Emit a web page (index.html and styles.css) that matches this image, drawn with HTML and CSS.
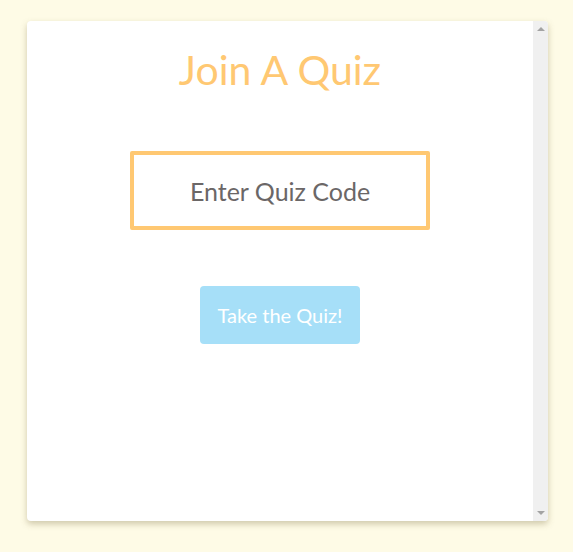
FILE: index.html
```html
<!DOCTYPE html>
<html>
<head>
<meta charset="utf-8">
<link rel="stylesheet" href="styles.css">
</head>
<body>
<div class="card">
  <div class="content">
    <h1 class="title">Join A Quiz</h1>
    <input class="code" type="text" placeholder="Enter Quiz Code">
    <button class="go">Take the Quiz!</button>
  </div>
  <div class="scrollbar">
    <span class="arrow up"></span>
    <span class="arrow down"></span>
  </div>
</div>
</body>
</html>
```
FILE: styles.css
```css
html, body {
  margin: 0;
  padding: 0;
  background: #fefbe6;
  font-family: "Lato", "Open Sans", sans-serif;
}
body {
  padding: 21px 25px 31px 27px;
}
.card {
  width: 521px;
  height: 500px;
  box-sizing: border-box;
  background: #fff;
  border-radius: 4px;
  box-shadow: 0 3px 6px rgba(120, 110, 60, 0.35);
  overflow: hidden;
  display: flex;
}
.content {
  flex: 1;
  display: flex;
  flex-direction: column;
  align-items: center;
}
.scrollbar {
  width: 15px;
  background: #f0f0f0;
  display: flex;
  flex-direction: column;
  justify-content: space-between;
  align-items: center;
  padding: 6px 0 6px;
}
.arrow {
  width: 0;
  height: 0;
  border-left: 4px solid transparent;
  border-right: 4px solid transparent;
}
.arrow.up {
  border-bottom: 4px solid #a3a3a3;
}
.arrow.down {
  border-top: 4px solid #a3a3a3;
}
.title {
  margin: 24px 0 0;
  font-size: 41px;
  font-weight: 400;
  color: #ffc872;
  line-height: 50px;
}
.code {
  margin-top: 56px;
  width: 300px;
  height: 79px;
  box-sizing: border-box;
  border: 4px solid #ffc872;
  border-radius: 2px;
  outline: none;
  text-align: center;
  font-family: inherit;
  font-size: 25px;
  color: #6b6767;
}
.code::placeholder {
  color: #6b6767;
  opacity: 1;
}
.go {
  margin-top: 56px;
  width: 160px;
  height: 58px;
  border: none;
  border-radius: 4px;
  background: #a6dff8;
  color: #fff;
  font-family: inherit;
  font-size: 20px;
}
```
